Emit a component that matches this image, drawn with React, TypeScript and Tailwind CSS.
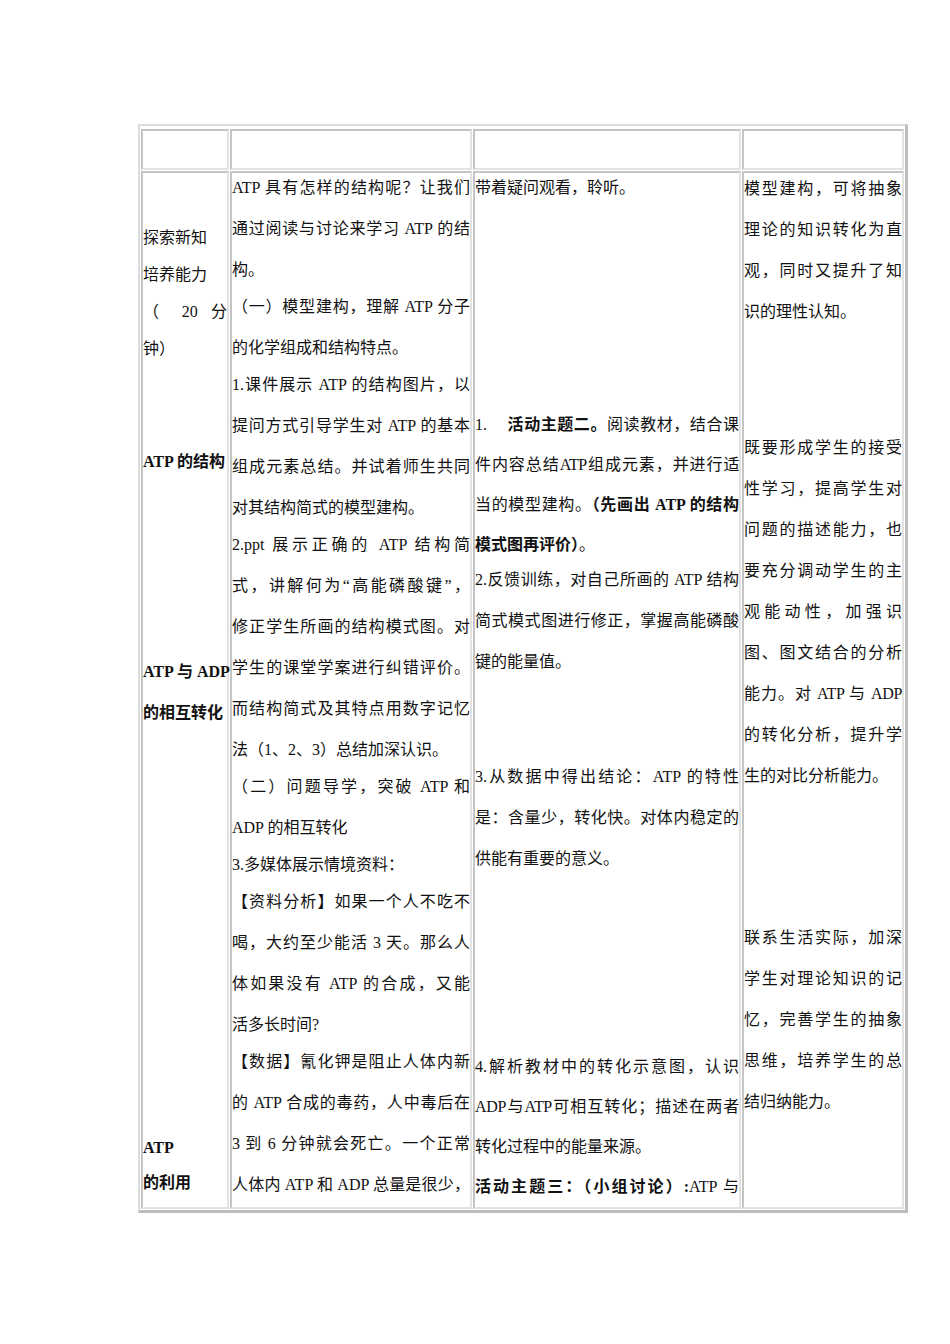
import type { ReactNode } from "react";

// one justified line (stretched to the cell's right edge)
function J({ children, className = "" }: { children: ReactNode; className?: string }) {
  return <div className={`whitespace-nowrap text-justify [text-align-last:justify] ${className}`}>{children}</div>;
}

// last line of a paragraph, left aligned
function L({ children, className = "" }: { children: ReactNode; className?: string }) {
  return <div className={`whitespace-nowrap ${className}`}>{children}</div>;
}

const cell =
  "border-2 border-t-[#c4c4c4] border-l-[#c4c4c4] border-r-[#e2e2e2] border-b-[#e2e2e2]";

export default function App() {
  return (
    <div className="min-h-[1344px] bg-white pt-[124px] font-['Liberation_Serif','Noto_Sans_CJK_SC',serif] text-[16px] text-[#111]">
      <div className="ml-[138px] w-[770px] border-t-2 border-l-2 border-t-[#dcdcdc] border-l-[#dcdcdc] border-r-[3px] border-b-[3px] border-r-[#bdbdbd] border-b-[#bdbdbd] px-[1px] pt-[3px] pb-[1px]">
        <div className="grid grid-cols-[88px_242px_268px_162px] grid-rows-[41px_1038px] gap-[1px]">
          {/* header row, empty */}
          <div className={cell} />
          <div className={cell} />
          <div className={cell} />
          <div className={cell} />

          {/* column 1 */}
          <div className={cell}>
            <div className="mt-[46px] leading-[37px]">
              <L>探索新知</L>
              <L>培养能力</L>
              <J>（ 20 分</J>
              <L>钟）</L>
            </div>
            <div className="mt-[74px] leading-[41px] font-bold">
              <L>ATP 的结构</L>
            </div>
            <div className="mt-[169px] leading-[41px] font-bold">
              <J>ATP 与 ADP</J>
              <L>的相互转化</L>
            </div>
            <div className="mt-[397px] leading-[35px] font-bold">
              <L>ATP</L>
              <L>的利用</L>
            </div>
          </div>

          {/* column 2 */}
          <div className={cell}>
            <div className="-mt-[6px] leading-[41px]">
              <J>ATP 具有怎样的结构呢？让我们</J>
              <J>通过阅读与讨论来学习 ATP 的结</J>
              <L>构。</L>
            </div>
            <div className="-mt-[4px] leading-[41px]">
              <J>（一）模型建构，理解 ATP 分子</J>
              <L>的化学组成和结构特点。</L>
            </div>
            <div className="-mt-[4px] leading-[41px]">
              <J>1.课件展示 ATP 的结构图片，以</J>
              <J>提问方式引导学生对 ATP 的基本</J>
              <J>组成元素总结。并试着师生共同</J>
              <L>对其结构简式的模型建构。</L>
            </div>
            <div className="-mt-[4px] leading-[41px]">
              <J>2.ppt 展示正确的 ATP 结构简</J>
              <J>式，讲解何为“高能磷酸键”，</J>
              <J>修正学生所画的结构模式图。对</J>
              <J>学生的课堂学案进行纠错评价。</J>
              <J>而结构简式及其特点用数字记忆</J>
              <L>法（1、2、3）总结加深认识。</L>
            </div>
            <div className="-mt-[4px] leading-[41px]">
              <J>（二）问题导学，突破 ATP 和</J>
              <L>ADP 的相互转化</L>
            </div>
            <div className="-mt-[4px] leading-[41px]">
              <L>3.多媒体展示情境资料：</L>
            </div>
            <div className="-mt-[4px] leading-[41px]">
              <J>【资料分析】如果一个人不吃不</J>
              <J>喝，大约至少能活 3 天。那么人</J>
              <J>体如果没有 ATP 的合成，又能</J>
              <L>活多长时间?</L>
            </div>
            <div className="-mt-[4px] leading-[41px]">
              <J>【数据】氰化钾是阻止人体内新</J>
              <J>的 ATP 合成的毒药，人中毒后在</J>
              <J>3 到 6 分钟就会死亡。一个正常</J>
              <J>人体内 ATP 和 ADP 总量是很少，</J>
            </div>
          </div>

          {/* column 3 */}
          <div className={cell}>
            <div className="-mt-[6px] leading-[41px]">
              <L>带着疑问观看，聆听。</L>
            </div>
            <div className="mt-[197px] leading-[40px]">
              <J>
                1.<span className="inline-block w-[20px]" />
                <b>活动主题二。</b>阅读教材，结合课
              </J>
              <J className="tracking-[-0.5px]">件内容总结ATP组成元素，并进行适</J>
              <J>
                当的模型建构。<b>（先画出 ATP 的结构</b>
              </J>
              <L>
                <b>模式图再评价）</b>。
              </L>
            </div>
            <div className="-mt-[6px] leading-[41px]">
              <J>2.反馈训练，对自己所画的 ATP 结构</J>
              <J>简式模式图进行修正，掌握高能磷酸</J>
              <L>键的能量值。</L>
            </div>
            <div className="mt-[74px] leading-[41px]">
              <J>3.从数据中得出结论：ATP 的特性</J>
              <J>是：含量少，转化快。对体内稳定的</J>
              <L>供能有重要的意义。</L>
            </div>
            <div className="mt-[168px] leading-[40px]">
              <J>4.解析教材中的转化示意图，认识</J>
              <J className="tracking-[-0.3px]">ADP与ATP可相互转化；描述在两者</J>
              <L>转化过程中的能量来源。</L>
              <J>
                <b>活动主题三：（小组讨论）:</b>ATP 与
              </J>
            </div>
          </div>

          {/* column 4 */}
          <div className={cell}>
            <div className="-mt-[5px] leading-[41px]">
              <J>模型建构，可将抽象</J>
              <J>理论的知识转化为直</J>
              <J>观，同时又提升了知</J>
              <L>识的理性认知。</L>
            </div>
            <div className="mt-[95px] leading-[41px]">
              <J>既要形成学生的接受</J>
              <J>性学习，提高学生对</J>
              <J>问题的描述能力，也</J>
              <J>要充分调动学生的主</J>
              <J>观能动性，加强识</J>
              <J>图、图文结合的分析</J>
              <J className="tracking-[-0.3px]">能力。对 ATP 与 ADP</J>
              <J>的转化分析，提升学</J>
              <L>生的对比分析能力。</L>
            </div>
            <div className="mt-[121px] leading-[41px]">
              <J>联系生活实际，加深</J>
              <J>学生对理论知识的记</J>
              <J>忆，完善学生的抽象</J>
              <J>思维，培养学生的总</J>
              <L>结归纳能力。</L>
            </div>
          </div>
        </div>
      </div>
    </div>
  );
}
